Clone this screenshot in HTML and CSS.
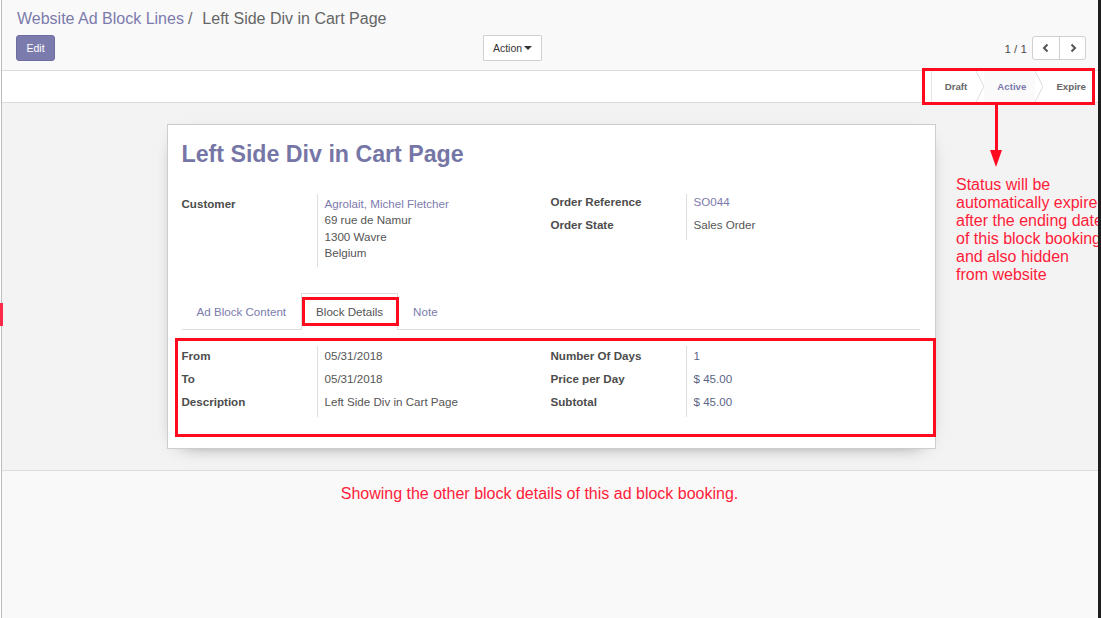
FILE: index.html
```html
<!DOCTYPE html>
<html lang="en">
<head>
<meta charset="utf-8">
<title>Website Ad Block Lines / Left Side Div in Cart Page</title>
<link rel="stylesheet" href="styles.css">
</head>
<body>
<div class="screen">
  <div class="app">
    <header class="cp">
      <div class="crumbs"><span class="crumb-link">Website Ad Block Lines</span><span class="crumb-sep">/</span><span class="crumb-cur">Left Side Div in Cart Page</span></div>
      <div class="cp-row">
        <div class="cp-left"><button class="btn btn-edit">Edit</button></div>
        <button class="btn btn-action">Action <span class="caret"></span></button>
        <div class="pager">
          <span class="pager-val">1 / 1</span>
          <div class="pager-btns">
            <button class="pager-btn"><svg width="10" height="10" viewBox="0 0 10 10"><polyline points="6.5,1.5 3,5 6.5,8.5" fill="none" stroke="#555" stroke-width="2"/></svg></button>
            <button class="pager-btn"><svg width="10" height="10" viewBox="0 0 10 10"><polyline points="3.5,1.5 7,5 3.5,8.5" fill="none" stroke="#555" stroke-width="2"/></svg></button>
          </div>
        </div>
      </div>
    </header>

    <div class="statusrow">
      <div class="statusbar">
        <span class="st">Draft</span>
        <svg class="chev" width="8" height="31" viewBox="0 0 8 31"><polyline points="0,0 8,15.5 0,31" fill="none" stroke="#dcdcdc" stroke-width="1"/></svg>
        <span class="st st-current">Active</span>
        <svg class="chev" width="8" height="31" viewBox="0 0 8 31"><polyline points="0,0 8,15.5 0,31" fill="none" stroke="#dcdcdc" stroke-width="1"/></svg>
        <span class="st">Expire</span>
      </div>
    </div>

    <div class="sheet-bg">
      <div class="sheet">
        <h1 class="title">Left Side Div in Cart Page</h1>
        <div class="groups">
          <div class="grp">
            <div class="lbl lbl-cust">Customer</div>
            <div class="val val-cust"><span class="link">Agrolait, Michel Fletcher</span><br>69 rue de Namur<br>1300 Wavre<br>Belgium</div>
          </div>
          <div class="grp">
            <div class="lbl">Order Reference</div>
            <div class="val"><span class="link">SO044</span></div>
            <div class="lbl">Order State</div>
            <div class="val">Sales Order</div>
          </div>
        </div>

        <ul class="tabs">
          <li class="tab">Ad Block Content</li>
          <li class="tab tab-active">Block Details</li>
          <li class="tab">Note</li>
        </ul>

        <div class="pane">
          <div class="groups">
            <div class="grp">
              <div class="lbl first">From</div>
              <div class="val first">05/31/2018</div>
              <div class="lbl">To</div>
              <div class="val">05/31/2018</div>
              <div class="lbl">Description</div>
              <div class="val">Left Side Div in Cart Page</div>
            </div>
            <div class="grp">
              <div class="lbl first">Number Of Days</div>
              <div class="val num first">1</div>
              <div class="lbl">Price per Day</div>
              <div class="val num">$ 45.00</div>
              <div class="lbl">Subtotal</div>
              <div class="val num">$ 45.00</div>
            </div>
          </div>
          <div class="pane-sep"></div>
        </div>
      </div>
    </div>

    <div class="bottom">
      <p class="bottom-note">Showing the other block details of this ad block booking.</p>
    </div>
  </div>

  <div class="ann-box ann-status"></div>
  <div class="ann-line"></div>
  <div class="ann-head"></div>
  <p class="ann-text">Status will be<br>automatically expired<br>after the ending date<br>of this block booking<br>and also hidden<br>from website</p>
  <div class="ann-box ann-tab"></div>
  <div class="ann-box ann-details"></div>
  <div class="ann-mark"></div>

  <div class="edge"></div>
</div>
</body>
</html>
```

FILE: styles.css
```css
* { box-sizing: border-box; }

html, body {
  margin: 0;
  padding: 0;
}

body {
  font-family: "Liberation Sans", Arial, sans-serif;
  background: #fff;
  color: #4c4c4c;
  overflow: hidden;
}

.screen {
  position: relative;
  display: flex;
  width: 1101px;
  height: 618px;
  overflow: hidden;
}

.app {
  flex: 1;
  margin-left: 1px;
  border-left: 1px solid #bdbdbd;
  display: flex;
  flex-direction: column;
  overflow: hidden;
}

.edge {
  position: relative;
  z-index: 5;
  width: 3px;
  background: #1e1e1e;
}

/* control panel */
.cp {
  background: #f9f9f9;
  padding: 8px 12px 9px 14px;
  border-bottom: 1px solid #dcdcdc;
}

.crumbs {
  font-size: 16px;
  line-height: 22px;
  height: 22px;
  white-space: nowrap;
  padding-left: 1px;
}

.crumb-link { color: #7c7bad; }
.crumb-sep { color: #6d6d6d; padding: 0 10px 0 4px; }
.crumb-cur { color: #666; }

.cp-row {
  display: flex;
  align-items: center;
  height: 26px;
  margin-top: 5px;
}

.cp-left { width: 467px; }

.btn {
  font-family: inherit;
  height: 26px;
  padding: 0;
  cursor: pointer;
}

.btn-edit {
  width: 39px;
  background: #7c7bad;
  border: 1px solid #6f6ea3;
  border-radius: 3px;
  color: #fff;
  font-size: 10.5px;
}

.btn-action {
  width: 59px;
  background: #fff;
  border: 1px solid #d0d0d0;
  border-radius: 1px;
  color: #333;
  font-size: 10.5px;
}

.caret {
  display: inline-block;
  width: 0;
  height: 0;
  border-top: 4px solid #333;
  border-left: 4px solid transparent;
  border-right: 4px solid transparent;
  vertical-align: 2px;
  margin-left: -1px;
}

.pager {
  margin-left: auto;
  display: flex;
  align-items: center;
}

.pager-val {
  font-size: 11.6px;
  color: #4c4c4c;
  margin-right: 5px;
}

.pager-btns {
  display: flex;
  height: 24px;
  border: 1px solid #d0d0d0;
  border-radius: 3px;
  background: #fff;
}

.pager-btn {
  width: 26px;
  height: 22px;
  padding: 0;
  border: 0;
  background: transparent;
  display: flex;
  align-items: center;
  justify-content: center;
}

.pager-btn + .pager-btn { border-left: 1px solid #d0d0d0; }

/* status row */
.statusrow {
  height: 32px;
  background: #fff;
  border-bottom: 1px solid #dcdcdc;
  display: flex;
  justify-content: flex-end;
  padding-right: 3px;
}

.statusbar {
  display: flex;
  align-items: stretch;
  height: 31px;
  border-left: 1px solid #e3e3e3;
}

.st {
  display: flex;
  align-items: center;
  padding: 0 9px 0 13px;
  font-size: 9.7px;
  font-weight: bold;
  color: #666;
}

.st-current {
  color: #7c7bad;
  background: #fafafa;
}

.chev { display: block; }

/* sheet area */
.sheet-bg {
  background: #f3f3f3;
  padding: 21px 0 21px 2px;
  border-bottom: 1px solid #dcdcdc;
}

.sheet {
  width: 769px;
  margin: 0 auto;
  background: #fff;
  border: 1px solid #cdcdcd;
  box-shadow: 0 5px 20px -15px #000;
  padding: 15px 15px 12px 14px;
}

.title {
  margin: 0;
  font-size: 23.2px;
  line-height: 28px;
  font-weight: bold;
  color: #7676a6;
}

.groups {
  display: grid;
  grid-template-columns: 369px 371px;
  margin-top: 26px;
  font-size: 11.6px;
  line-height: 16px;
}

.grp {
  display: grid;
  grid-template-columns: 135px 1fr;
  align-content: start;
}

.lbl {
  font-weight: bold;
  color: #4c4c4c;
  padding: 0 0 7px;
}

.val {
  color: #555;
  border-left: 1px solid #dedede;
  padding: 0 0 7px 7px;
}

.lbl-cust { padding-top: 2px; }

.val-cust {
  padding-top: 2px;
  padding-bottom: 6px;
  line-height: 16.3px;
}

.link { color: #7c7bad; }

.num { color: #5a6486; }

/* tabs */
.tabs {
  list-style: none;
  margin: 26px 0 0;
  padding: 0;
  display: flex;
  border-bottom: 1px solid #dedede;
}

.tab {
  font-size: 11.6px;
  line-height: 16px;
  padding: 10px 14px;
  color: #7c7bad;
  border: 1px solid transparent;
  border-bottom: 0;
  margin-bottom: -1px;
  height: 37px;
}

.tab-active {
  color: #555;
  background: #fff;
  border-color: #dedede;
}

.pane .groups { margin-top: 16px; }

.pane .first { padding-top: 2px; padding-bottom: 7px; }

.pane-sep {
  margin-top: 18px;
  border-top: 1px solid #e3e3e3;
}

/* bottom */
.bottom {
  flex: 1;
  background: #f9f9f9;
  padding: 14px 21px 0 0;
}

.bottom-note {
  margin: 0;
  text-align: center;
  font-size: 16px;
  line-height: 18px;
  color: #ff1c3a;
}

/* annotations */
.ann-box {
  position: absolute;
  border: 3px solid #ff0a1f;
}

.ann-status { left: 922px; top: 68px; width: 173px; height: 37px; }
.ann-tab { left: 302px; top: 297px; width: 97px; height: 29px; }
.ann-details { left: 175px; top: 338px; width: 761px; height: 99px; }

.ann-mark {
  position: absolute;
  left: 0;
  top: 303px;
  width: 3px;
  height: 23px;
  background: #ff2a45;
}

.ann-line {
  position: absolute;
  left: 995px;
  top: 105px;
  width: 3px;
  height: 47px;
  background: #ff0a1f;
}

.ann-head {
  position: absolute;
  left: 990px;
  top: 150px;
  width: 0;
  height: 0;
  border-left: 6.5px solid transparent;
  border-right: 6.5px solid transparent;
  border-top: 17px solid #ff0a1f;
}

.ann-text {
  position: absolute;
  left: 956px;
  top: 176px;
  margin: 0;
  font-size: 16px;
  line-height: 18px;
  color: #ff1c3a;
  white-space: nowrap;
}
```
